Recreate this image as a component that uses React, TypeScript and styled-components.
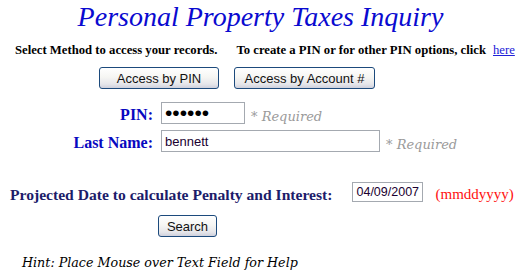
import styled, { createGlobalStyle } from 'styled-components'

const GlobalStyle = createGlobalStyle`
    body {
        margin: 0;
        background: #ffffff;
        font-family: "Liberation Serif", "Times New Roman", serif;
    }
`

const Page = styled.div`
    width: 525px;
    height: 277px;
    display: flex;
    flex-direction: column;
`

const Title = styled.h1`
    margin: 1px 0 0;
    font-size: 28px;
    line-height: 32px;
    font-weight: normal;
    font-style: italic;
    color: #0a0ad0;
    text-align: center;
    padding-right: 4px;
`

const MethodRow = styled.div`
    margin-top: 10px;
    padding-left: 15px;
    display: flex;
    white-space: nowrap;
    font-size: 12.7px;
    line-height: 14px;
    font-weight: bold;
    color: #000;
`

const PinOptions = styled.span`
    margin-left: 19px;
`

const HereLink = styled.a`
    margin-left: 7px;
    font-weight: normal;
    color: #2020d8;
    text-decoration: underline;
`

const ButtonRow = styled.div<{ $indent: number }>`
    padding-left: ${p => p.$indent}px;
    display: flex;
    gap: 15px;
`

const XpButton = styled.button<{ $width: number }>`
    width: ${p => p.$width}px;
    height: 22px;
    padding: 0;
    border: 1px solid #1c4a7c;
    border-radius: 3px;
    background: linear-gradient(180deg, #ffffff 0%, #f6f6f3 45%, #e6e6ea 80%, #cfd0dc 100%);
    font-family: "Liberation Sans", Arial, sans-serif;
    font-size: 13px;
    color: #111;
`

const AccessButtons = styled(ButtonRow)`
    margin-top: 10px;
`

const FieldRow = styled.div<{ $top: number }>`
    margin-top: ${p => p.$top}px;
    display: flex;
    align-items: flex-end;
`

const FieldLabel = styled.label`
    width: 153px;
    margin-right: 8px;
    text-align: right;
    font-size: 16px;
    line-height: 18px;
    font-weight: bold;
    color: #0808c0;
`

const TextInput = styled.input<{ $width: number; $height: number; $size?: number }>`
    box-sizing: border-box;
    flex-shrink: 0;
    width: ${p => p.$width}px;
    height: ${p => p.$height}px;
    margin: 0;
    padding: 0 2px 0 3px;
    border: 1px solid #a4a9b0;
    background: #fff;
    font-family: "Liberation Sans", Arial, sans-serif;
    font-size: ${p => p.$size ?? 13}px;
    color: #1a0030;
    outline: none;

    &[type="password"] {
        font-size: 21px;
        color: #000;
    }
`

const Required = styled.span`
    margin-left: 6px;
    white-space: nowrap;
    font-family: "DejaVu Serif", Georgia, serif;
    font-style: italic;
    font-size: 13px;
    line-height: 15px;
    color: #9a9a9a;
`

const DateRow = styled.div`
    margin-top: 30px;
    padding-left: 10px;
    display: flex;
    align-items: flex-end;
    white-space: nowrap;
`

const DateLabel = styled.label`
    flex-shrink: 0;
    margin-right: 20px;
    font-size: 15.6px;
    line-height: 14px;
    font-weight: bold;
    color: #1c1c6a;
`

const DateFormat = styled.span`
    margin-left: 12px;
    font-size: 15px;
    line-height: 16px;
    color: #ff1010;
`

const SearchRow = styled(ButtonRow)`
    margin-top: 13px;
`

const Hint = styled.p`
    margin: 18px 0 0;
    padding-left: 22px;
    font-family: "DejaVu Serif", Georgia, serif;
    font-style: italic;
    font-size: 12.7px;
    line-height: 15px;
    color: #000;
`

const App = () => {
    return (
        <Page>
            <GlobalStyle />
            <Title>Personal Property Taxes Inquiry</Title>

            <MethodRow>
                <span>Select Method to access your records.</span>
                <PinOptions>To create a PIN or for other PIN options, click</PinOptions>
                <HereLink href="#">here</HereLink>
            </MethodRow>

            <AccessButtons $indent={99}>
                <XpButton $width={120}>Access by PIN</XpButton>
                <XpButton $width={141}>Access by Account #</XpButton>
            </AccessButtons>

            <FieldRow $top={13}>
                <FieldLabel>PIN:</FieldLabel>
                <TextInput type="password" defaultValue="123456" $width={84} $height={22} />
                <Required>* Required</Required>
            </FieldRow>

            <FieldRow $top={6}>
                <FieldLabel>Last Name:</FieldLabel>
                <TextInput type="text" defaultValue="bennett" $width={219} $height={22} />
                <Required>* Required</Required>
            </FieldRow>

            <DateRow>
                <DateLabel>Projected Date to calculate Penalty and Interest:</DateLabel>
                <TextInput type="text" defaultValue="04/09/2007" $width={71} $height={20} $size={12.5} />
                <DateFormat>(mmddyyyy)</DateFormat>
            </DateRow>

            <SearchRow $indent={158}>
                <XpButton $width={59}>Search</XpButton>
            </SearchRow>

            <Hint>Hint: Place Mouse over Text Field for Help</Hint>
        </Page>
    )
}

export default App
